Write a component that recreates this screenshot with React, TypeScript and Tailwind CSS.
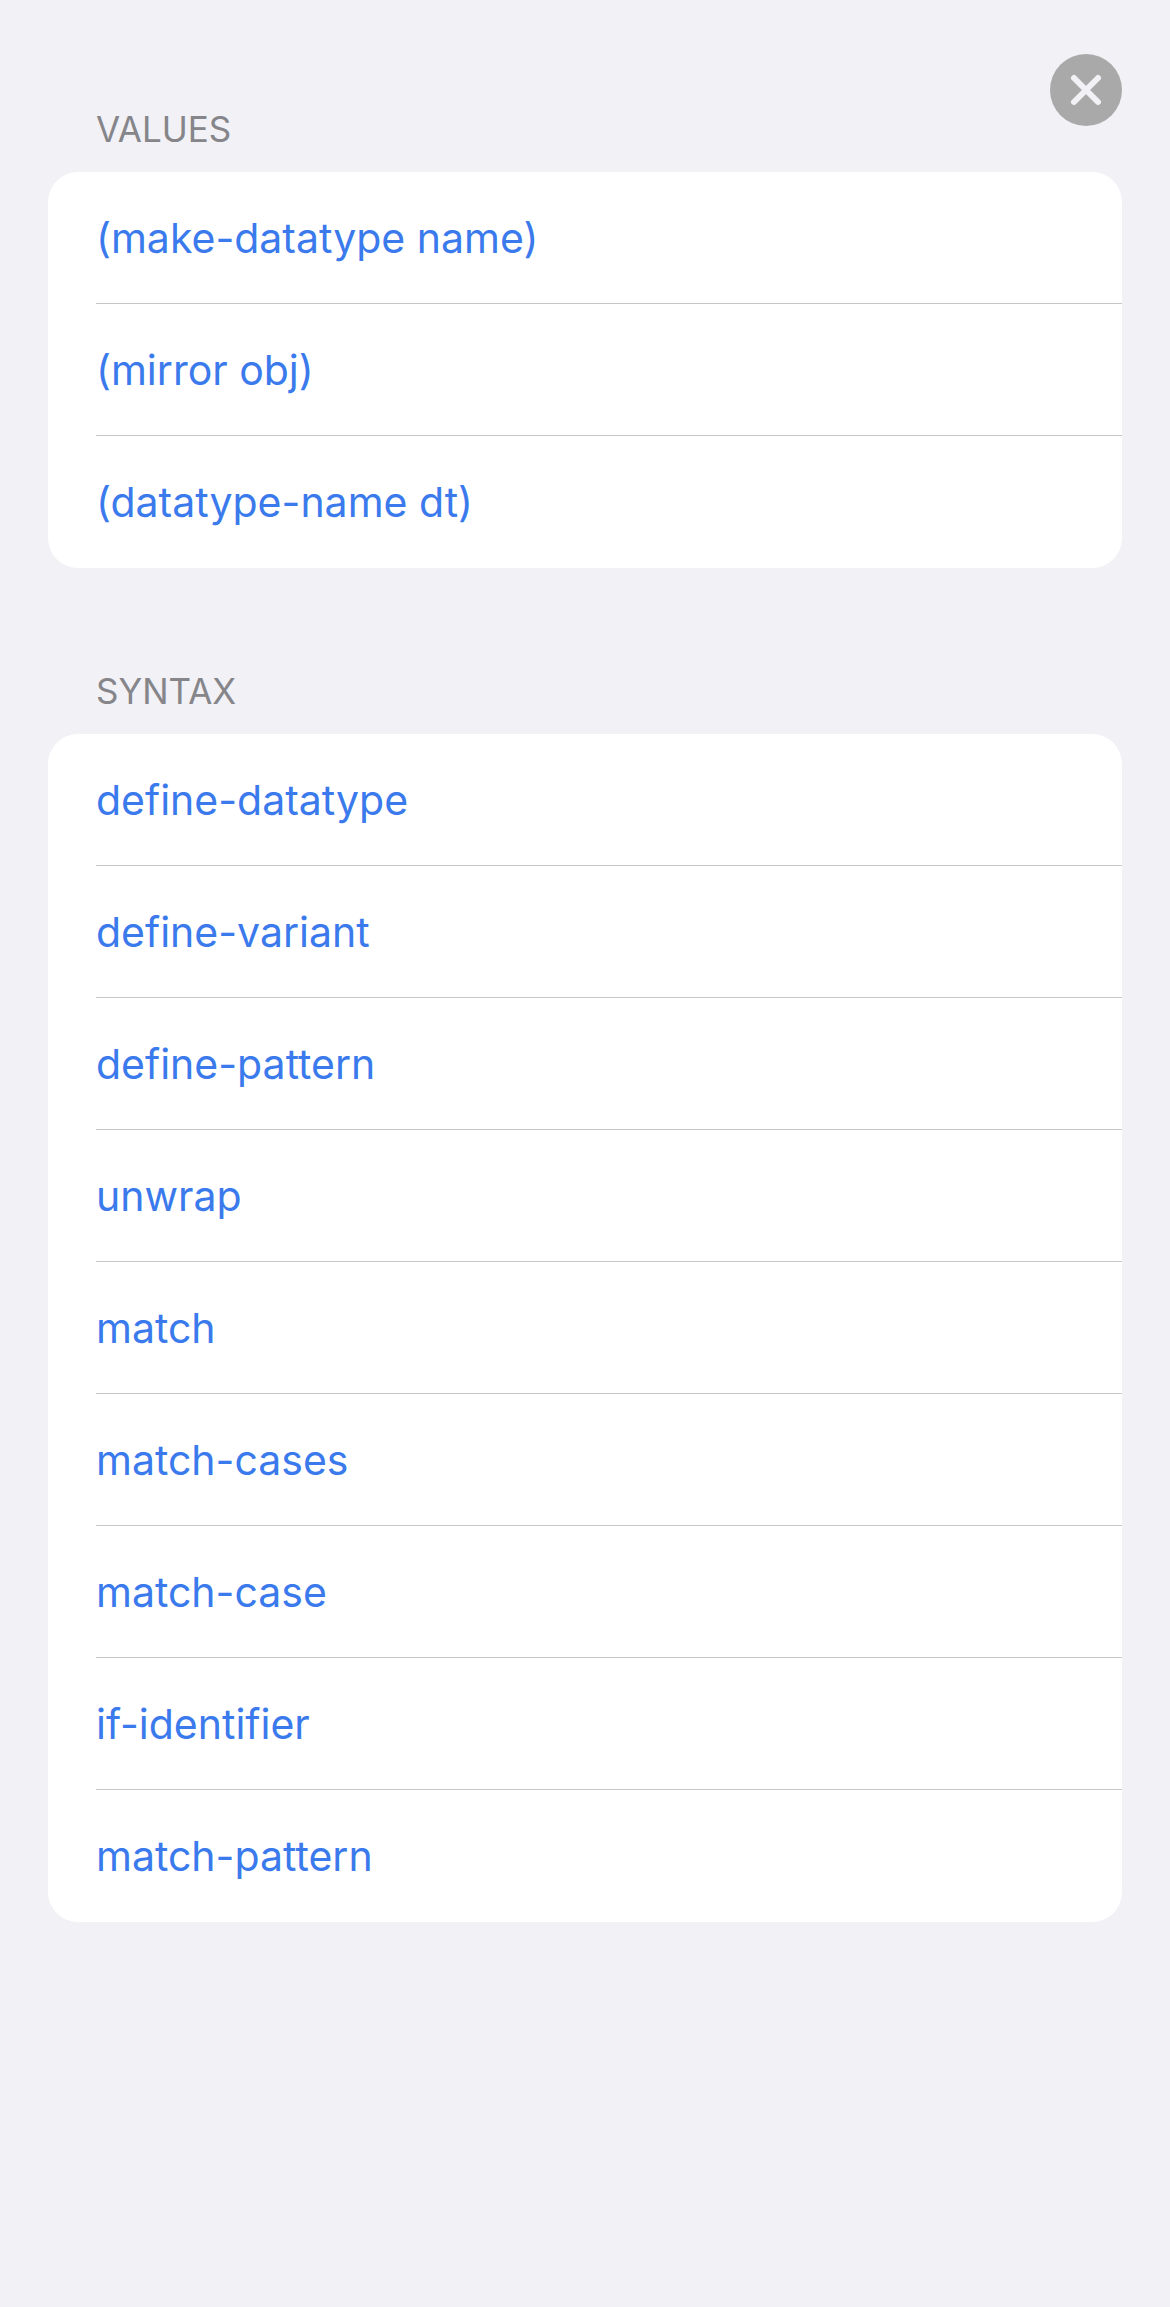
const values = ['(make-datatype name)', '(mirror obj)', '(datatype-name dt)'];

const syntax = [
  'define-datatype',
  'define-variant',
  'define-pattern',
  'unwrap',
  'match',
  'match-cases',
  'match-case',
  'if-identifier',
  'match-pattern',
];

function Section({ title, items }: { title: string; items: string[] }) {
  return (
    <section>
      <h2 className="mb-[23px] pl-12 text-[35px] leading-10 font-normal text-[#85858a]">{title}</h2>
      <ul className="overflow-hidden rounded-[30px] bg-white pl-12">
        {items.map((item) => (
          <li key={item} className="h-[132px] border-b border-[#c6c6c8] last:border-transparent">
            <a href="#" className="flex h-full items-center pt-0.5 text-[41px] text-[#3a7aec]">
              {item}
            </a>
          </li>
        ))}
      </ul>
    </section>
  );
}

export default function App() {
  return (
    <main className="relative flex min-h-screen flex-col gap-[103px] bg-[#f1f1f6] px-12 pt-[109px] pb-12 font-['Inter',sans-serif]">
      <button
        type="button"
        aria-label="Close"
        className="absolute top-[54px] right-12 size-[72px] rounded-full bg-[#a9a9a9]"
      >
        <svg viewBox="0 0 72 72" className="size-full" fill="none" stroke="#f1f1f6" strokeWidth="6" strokeLinecap="round">
          <path d="M24 24 48 48M48 24 24 48" />
        </svg>
      </button>
      <Section title="VALUES" items={values} />
      <Section title="SYNTAX" items={syntax} />
    </main>
  );
}
